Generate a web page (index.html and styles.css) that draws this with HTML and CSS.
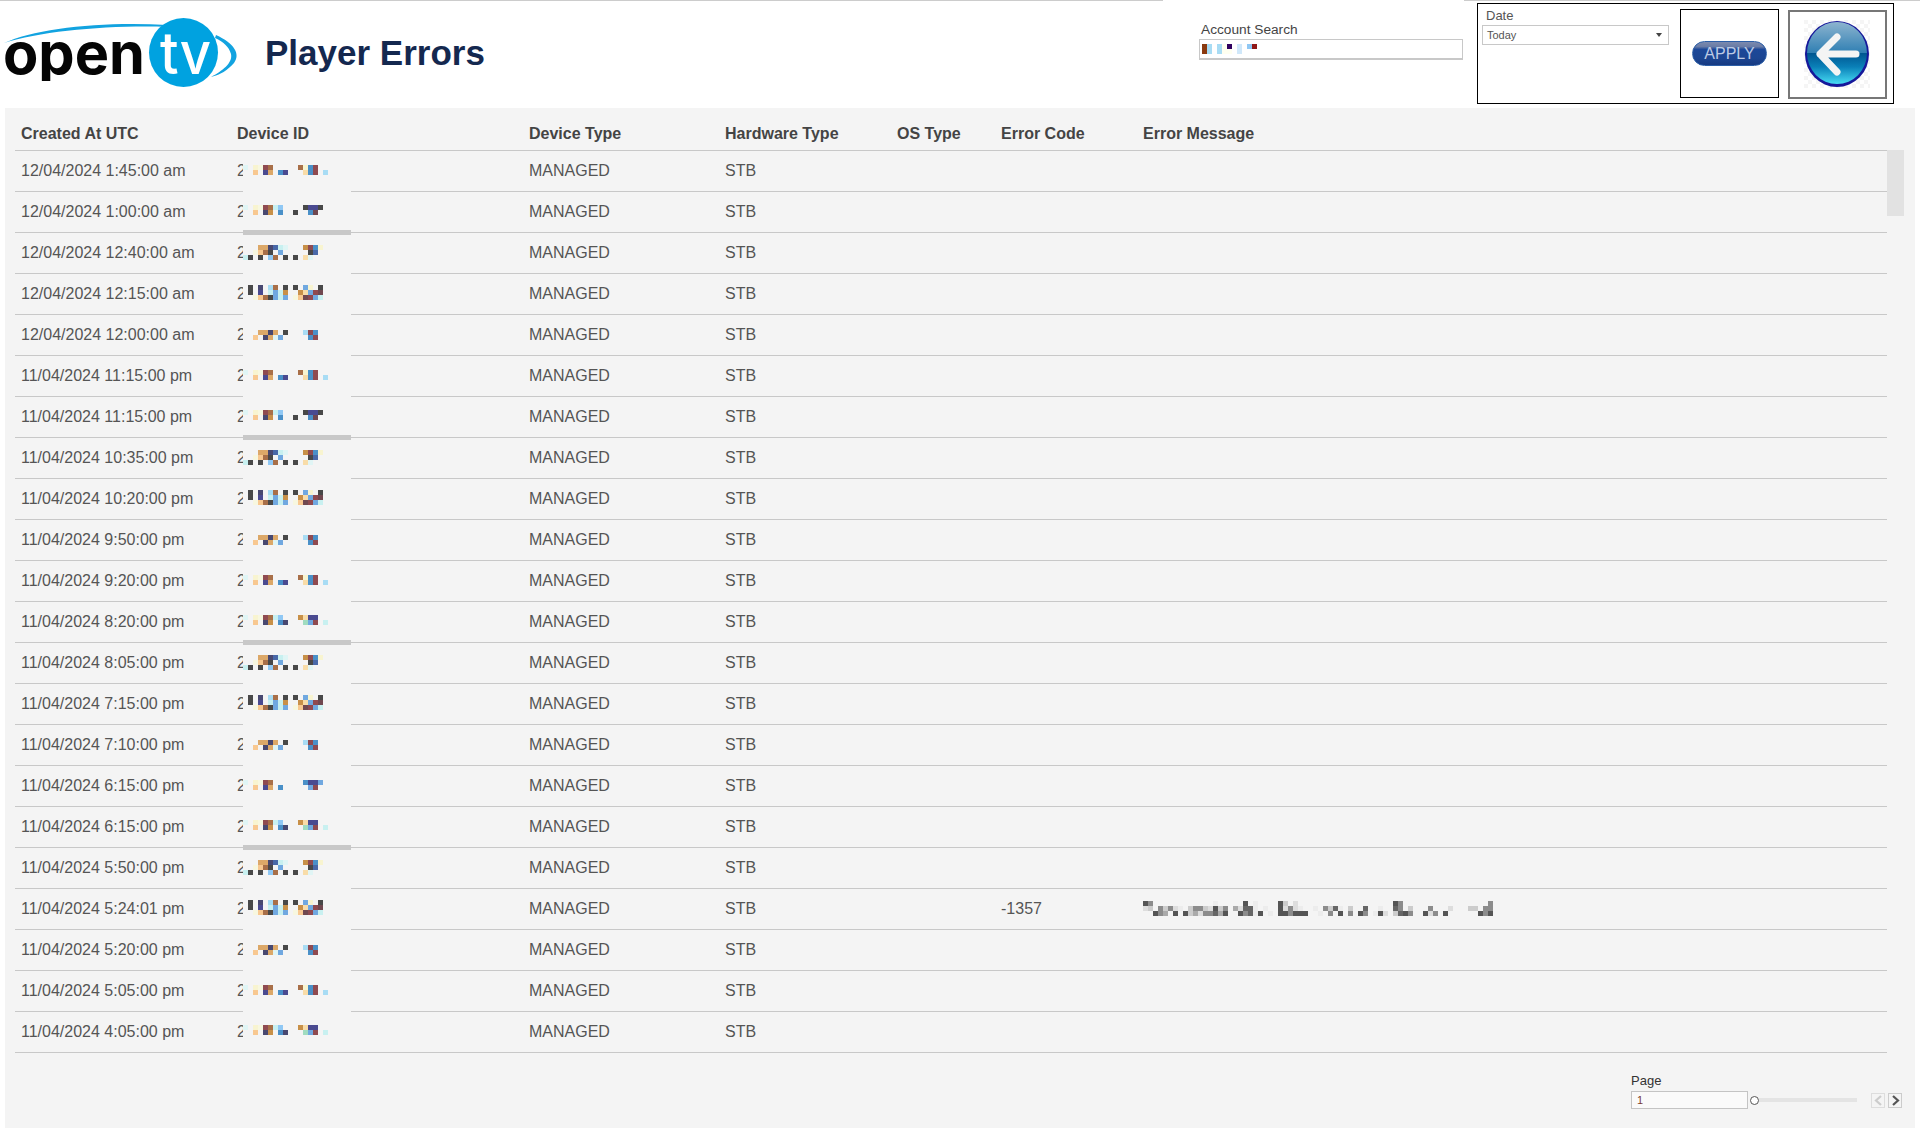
FILE: index.html
```html
<!DOCTYPE html>
<html lang="en">
<head>
<meta charset="utf-8">
<title>Player Errors</title>
<link rel="stylesheet" href="styles.css">
</head>
<body>
<svg class="defs px" aria-hidden="true">
  <symbol id="a" viewBox="0 0 85 40"><rect class="cy" x="0" y="14"/><rect class="ye" x="10" y="14"/><rect class="yl" x="15" y="14"/><rect class="re" x="20" y="14"/><rect class="br" x="25" y="14"/><rect class="br" x="55" y="14"/><rect class="ye" x="60" y="14"/><rect class="bl" x="65" y="14"/><rect class="re" x="70" y="14"/><rect class="pe" x="10" y="19"/><rect class="in" x="20" y="19"/><rect class="ta" x="25" y="19"/><rect class="bl" x="35" y="19"/><rect class="in" x="40" y="19"/><rect class="pa" x="60" y="19"/><rect class="bl" x="65" y="19"/><rect class="re" x="70" y="19"/><rect class="sk" x="80" y="19"/></symbol>
  <symbol id="b" viewBox="0 0 85 40"><rect class="cy" x="0" y="13"/><rect class="ye" x="10" y="13"/><rect class="yl" x="15" y="13"/><rect class="re" x="20" y="13"/><rect class="br" x="25" y="13"/><rect class="lc" x="30" y="13"/><rect class="mb" x="35" y="13"/><rect class="dk" x="60" y="13"/><rect class="in" x="65" y="13"/><rect class="in" x="70" y="13"/><rect class="dk" x="75" y="13"/><rect class="pe" x="10" y="18"/><rect class="sl" x="20" y="18"/><rect class="or" x="25" y="18"/><rect class="bl" x="35" y="18"/><rect class="dk" x="50" y="18"/><rect class="bl" x="65" y="18"/><rect class="mr" x="70" y="18"/></symbol>
  <symbol id="c" viewBox="0 0 85 40"><rect class="ta" x="15" y="12"/><rect class="ta" x="20" y="12"/><rect class="sl" x="25" y="12"/><rect class="st" x="30" y="12"/><rect class="lc" x="35" y="12"/><rect class="cy" x="40" y="12"/><rect class="or" x="60" y="12"/><rect class="re" x="65" y="12"/><rect class="bl" x="70" y="12"/><rect class="ye" x="75" y="12"/><rect class="yl" x="10" y="17"/><rect class="pe" x="15" y="17"/><rect class="br" x="20" y="17"/><rect class="dk" x="25" y="17"/><rect class="lb" x="35" y="17"/><rect class="dk" x="65" y="17"/><rect class="st" x="70" y="17"/><rect class="lc" x="0" y="22"/><rect class="dk" x="5" y="22"/><rect class="dk" x="15" y="22"/><rect class="mb" x="25" y="22"/><rect class="br" x="30" y="22"/><rect class="dk" x="40" y="22"/><rect class="dk" x="50" y="22"/><rect class="pa" x="60" y="22"/><rect class="cy" x="65" y="22"/></symbol>
  <symbol id="d" viewBox="0 0 85 40"><rect class="dk" x="5" y="11"/><rect class="sl" x="15" y="11"/><rect class="sk" x="25" y="11"/><rect class="br" x="30" y="11"/><rect class="dk" x="40" y="11"/><rect class="dk" x="50" y="11"/><rect class="lb" x="60" y="11"/><rect class="ye" x="65" y="11"/><rect class="dk" x="75" y="11"/><rect class="dk" x="5" y="16"/><rect class="in" x="15" y="16"/><rect class="lc" x="25" y="16"/><rect class="lb" x="30" y="16"/><rect class="lc" x="35" y="16"/><rect class="or" x="40" y="16"/><rect class="or" x="55" y="16"/><rect class="pa" x="60" y="16"/><rect class="lb" x="65" y="16"/><rect class="re" x="70" y="16"/><rect class="mr" x="75" y="16"/><rect class="yl" x="10" y="21"/><rect class="pe" x="15" y="21"/><rect class="br" x="20" y="21"/><rect class="dk" x="25" y="21"/><rect class="lb" x="30" y="21"/><rect class="lc" x="35" y="21"/><rect class="lb" x="40" y="21"/><rect class="yl" x="50" y="21"/><rect class="pe" x="55" y="21"/><rect class="mr" x="60" y="21"/><rect class="re" x="65" y="21"/><rect class="lb" x="70" y="21"/><rect class="lc" x="75" y="21"/></symbol>
  <symbol id="e" viewBox="0 0 85 40"><rect class="ta" x="15" y="15"/><rect class="ta" x="20" y="15"/><rect class="sl" x="25" y="15"/><rect class="ta" x="30" y="15"/><rect class="dk" x="40" y="15"/><rect class="sk" x="60" y="15"/><rect class="re" x="65" y="15"/><rect class="bl" x="70" y="15"/><rect class="pe" x="10" y="20"/><rect class="sl" x="20" y="20"/><rect class="ta" x="25" y="20"/><rect class="cy" x="30" y="20"/><rect class="lb" x="35" y="20"/><rect class="bl" x="65" y="20"/><rect class="re" x="70" y="20"/></symbol>
  <symbol id="g" viewBox="0 0 85 40"><rect class="cy" x="0" y="13"/><rect class="ye" x="10" y="13"/><rect class="yl" x="15" y="13"/><rect class="re" x="20" y="13"/><rect class="br" x="25" y="13"/><rect class="lc" x="30" y="13"/><rect class="mb" x="35" y="13"/><rect class="or" x="55" y="13"/><rect class="pa" x="60" y="13"/><rect class="in" x="65" y="13"/><rect class="in" x="70" y="13"/><rect class="pe" x="10" y="18"/><rect class="sl" x="20" y="18"/><rect class="or" x="25" y="18"/><rect class="bl" x="35" y="18"/><rect class="sl" x="40" y="18"/><rect class="mt" x="60" y="18"/><rect class="lb" x="65" y="18"/><rect class="re" x="70" y="18"/><rect class="lc" x="80" y="18"/></symbol>
  <symbol id="f" viewBox="0 0 85 40"><rect class="cy" x="0" y="14"/><rect class="ye" x="10" y="14"/><rect class="yl" x="15" y="14"/><rect class="re" x="20" y="14"/><rect class="br" x="25" y="14"/><rect class="bl" x="60" y="14"/><rect class="in" x="65" y="14"/><rect class="in" x="70" y="14"/><rect class="lb" x="75" y="14"/><rect class="pe" x="10" y="19"/><rect class="in" x="20" y="19"/><rect class="ta" x="25" y="19"/><rect class="bl" x="35" y="19"/><rect class="lb" x="65" y="19"/><rect class="re" x="70" y="19"/></symbol>
</svg>

<header class="top">
  <svg class="logo" viewBox="0 0 245 108" width="245" height="108" role="img" aria-label="OpenTV">
    <defs><clipPath id="cut"><rect x="0" y="30" width="160" height="51"/></clipPath></defs>
    <path class="sw" d="M4 43C36 28 105 21 168 25L168 27C110 25 42 31 4 43Z"/>
    <path class="sw" d="M216 35C234 43 241 54 234 63C228 70 220 75 211 77C222 71 233 63 231 54C229 47 224 42 215 38Z"/>
    <text class="logo-open" x="3" y="74" textLength="142" lengthAdjust="spacingAndGlyphs" clip-path="url(#cut)">open</text>
    <circle class="logo-disc" cx="183.500" cy="52.500" r="34.500"/>
    <text class="logo-tv" x="160" y="74" textLength="51" lengthAdjust="spacingAndGlyphs">tv</text>
  </svg>
  <h1 class="title">Player Errors</h1>
  <div class="account">
    <label class="field-label">Account Search</label>
    <div class="account-input">
      <svg class="px" width="60" height="10" viewBox="0 0 60 10"><rect class="ac1" x="0" y="0"/><rect class="ac1" x="0" y="5"/><rect class="sk" x="5" y="0"/><rect class="sk" x="5" y="5"/><rect class="sk" x="15" y="0"/><rect class="sk" x="15" y="5"/><rect class="ac2" x="20" y="0"/><rect class="ac2" x="20" y="5"/><rect class="ac3" x="25" y="0"/><rect class="ac2" x="25" y="5"/><rect class="ac4" x="35" y="0"/><rect class="ac4" x="35" y="5"/><rect class="mb" x="45" y="0"/><rect class="ac5" x="50" y="0"/></svg>
    </div>
  </div>
  <section class="filters">
    <div class="date-field">
      <label class="date-label">Date</label>
      <div class="date-select"><span>Today</span><span class="caret"></span></div>
    </div>
    <div class="apply-box"><button class="apply-btn" type="button">APPLY</button></div>
    <div class="back-box">
      <svg width="67" height="69" viewBox="0 0 67 69" role="img" aria-label="Back">
        <defs>
          <pattern id="chk" width="8" height="8" patternUnits="userSpaceOnUse"><rect width="8" height="8" fill="#fff"/><rect width="4" height="4" fill="#f5f5f5"/><rect x="4" y="4" width="4" height="4" fill="#f5f5f5"/></pattern>
          <linearGradient id="up" x1="0" y1="0" x2="0" y2="1"><stop offset="0" stop-color="#8db4cf"/><stop offset="1" stop-color="#2f7fb3"/></linearGradient>
          <linearGradient id="lo" x1="0" y1="0" x2="0" y2="1"><stop offset="0" stop-color="#00558f"/><stop offset="0.45" stop-color="#0a80b8"/><stop offset="1" stop-color="#48dcf4"/></linearGradient>
        </defs>
        <rect width="66" height="68" fill="url(#chk)"/>
        <ellipse cx="33" cy="34" rx="32" ry="33" fill="#16189a"/>
        <path d="M3 33A30 31 0 0 1 63 33Z" fill="url(#up)"/>
        <path d="M3 33A30 31 0 0 0 63 33Z" fill="url(#lo)"/>
        <path class="arrow" d="M16 34H52M33 17L16 34L33 52"/>
      </svg>
    </div>
  </section>
</header>

<main class="panel">
  <div class="grid-wrap">
    <div class="table">
      <div class="row head"><span>Created At UTC</span><span>Device ID</span><span>Device Type</span><span>Hardware Type</span><span>OS Type</span><span>Error Code</span><span>Error Message</span></div>
      <div class="row"><span>12/04/2024 1:45:00 am</span><span class="dev"><i>2</i><svg class="px id"><use href="#a"/></svg><b class="mask"></b></span><span>MANAGED</span><span>STB</span><span></span><span></span><span></span></div>
      <div class="row"><span>12/04/2024 1:00:00 am</span><span class="dev"><i>2</i><svg class="px id"><use href="#b"/></svg><b class="bar"></b></span><span>MANAGED</span><span>STB</span><span></span><span></span><span></span></div>
      <div class="row"><span>12/04/2024 12:40:00 am</span><span class="dev"><i>2</i><svg class="px id"><use href="#c"/></svg><b class="mask"></b></span><span>MANAGED</span><span>STB</span><span></span><span></span><span></span></div>
      <div class="row"><span>12/04/2024 12:15:00 am</span><span class="dev"><i>2</i><svg class="px id"><use href="#d"/></svg><b class="mask"></b></span><span>MANAGED</span><span>STB</span><span></span><span></span><span></span></div>
      <div class="row"><span>12/04/2024 12:00:00 am</span><span class="dev"><i>2</i><svg class="px id"><use href="#e"/></svg><b class="mask"></b></span><span>MANAGED</span><span>STB</span><span></span><span></span><span></span></div>
      <div class="row"><span>11/04/2024 11:15:00 pm</span><span class="dev"><i>2</i><svg class="px id"><use href="#a"/></svg><b class="mask"></b></span><span>MANAGED</span><span>STB</span><span></span><span></span><span></span></div>
      <div class="row"><span>11/04/2024 11:15:00 pm</span><span class="dev"><i>2</i><svg class="px id"><use href="#b"/></svg><b class="bar"></b></span><span>MANAGED</span><span>STB</span><span></span><span></span><span></span></div>
      <div class="row"><span>11/04/2024 10:35:00 pm</span><span class="dev"><i>2</i><svg class="px id"><use href="#c"/></svg><b class="mask"></b></span><span>MANAGED</span><span>STB</span><span></span><span></span><span></span></div>
      <div class="row"><span>11/04/2024 10:20:00 pm</span><span class="dev"><i>2</i><svg class="px id"><use href="#d"/></svg><b class="mask"></b></span><span>MANAGED</span><span>STB</span><span></span><span></span><span></span></div>
      <div class="row"><span>11/04/2024 9:50:00 pm</span><span class="dev"><i>2</i><svg class="px id"><use href="#e"/></svg><b class="mask"></b></span><span>MANAGED</span><span>STB</span><span></span><span></span><span></span></div>
      <div class="row"><span>11/04/2024 9:20:00 pm</span><span class="dev"><i>2</i><svg class="px id"><use href="#a"/></svg><b class="mask"></b></span><span>MANAGED</span><span>STB</span><span></span><span></span><span></span></div>
      <div class="row"><span>11/04/2024 8:20:00 pm</span><span class="dev"><i>2</i><svg class="px id"><use href="#g"/></svg><b class="bar"></b></span><span>MANAGED</span><span>STB</span><span></span><span></span><span></span></div>
      <div class="row"><span>11/04/2024 8:05:00 pm</span><span class="dev"><i>2</i><svg class="px id"><use href="#c"/></svg><b class="mask"></b></span><span>MANAGED</span><span>STB</span><span></span><span></span><span></span></div>
      <div class="row"><span>11/04/2024 7:15:00 pm</span><span class="dev"><i>2</i><svg class="px id"><use href="#d"/></svg><b class="mask"></b></span><span>MANAGED</span><span>STB</span><span></span><span></span><span></span></div>
      <div class="row"><span>11/04/2024 7:10:00 pm</span><span class="dev"><i>2</i><svg class="px id"><use href="#e"/></svg><b class="mask"></b></span><span>MANAGED</span><span>STB</span><span></span><span></span><span></span></div>
      <div class="row"><span>11/04/2024 6:15:00 pm</span><span class="dev"><i>2</i><svg class="px id"><use href="#f"/></svg><b class="mask"></b></span><span>MANAGED</span><span>STB</span><span></span><span></span><span></span></div>
      <div class="row"><span>11/04/2024 6:15:00 pm</span><span class="dev"><i>2</i><svg class="px id"><use href="#g"/></svg><b class="bar"></b></span><span>MANAGED</span><span>STB</span><span></span><span></span><span></span></div>
      <div class="row"><span>11/04/2024 5:50:00 pm</span><span class="dev"><i>2</i><svg class="px id"><use href="#c"/></svg><b class="mask"></b></span><span>MANAGED</span><span>STB</span><span></span><span></span><span></span></div>
      <div class="row"><span>11/04/2024 5:24:01 pm</span><span class="dev"><i>2</i><svg class="px id"><use href="#d"/></svg><b class="mask"></b></span><span>MANAGED</span><span>STB</span><span></span><span>-1357</span><span class="msg">
        <svg class="px" width="360" height="40" viewBox="0 0 360 40"><rect class="g5" x="0" y="12"/><rect class="g9" x="5" y="12"/><rect class="ge" x="70" y="12"/><rect class="g5" x="100" y="12"/><rect class="ge" x="110" y="12"/><rect class="g5" x="135" y="12"/><rect class="gc" x="140" y="12"/><rect class="gd" x="150" y="12"/><rect class="g5" x="250" y="12"/><rect class="g9" x="255" y="12"/><rect class="g9" x="345" y="12"/><rect class="gd" x="0" y="17"/><rect class="gc" x="5" y="17"/><rect class="g9" x="15" y="17"/><rect class="gc" x="20" y="17"/><rect class="g9" x="25" y="17"/><rect class="gd" x="30" y="17"/><rect class="ge" x="35" y="17"/><rect class="gc" x="45" y="17"/><rect class="g9" x="50" y="17"/><rect class="g9" x="55" y="17"/><rect class="gc" x="60" y="17"/><rect class="gd" x="65" y="17"/><rect class="g5" x="70" y="17"/><rect class="gc" x="75" y="17"/><rect class="g9" x="80" y="17"/><rect class="ga" x="90" y="17"/><rect class="gd" x="95" y="17"/><rect class="g6" x="100" y="17"/><rect class="g6" x="105" y="17"/><rect class="ge" x="110" y="17"/><rect class="ge" x="120" y="17"/><rect class="g5" x="135" y="17"/><rect class="gd" x="140" y="17"/><rect class="g9" x="145" y="17"/><rect class="gd" x="150" y="17"/><rect class="ge" x="155" y="17"/><rect class="ge" x="170" y="17"/><rect class="g9" x="180" y="17"/><rect class="gc" x="185" y="17"/><rect class="g6" x="190" y="17"/><rect class="ge" x="195" y="17"/><rect class="gc" x="205" y="17"/><rect class="g6" x="220" y="17"/><rect class="ge" x="235" y="17"/><rect class="g6" x="250" y="17"/><rect class="g9" x="255" y="17"/><rect class="gc" x="265" y="17"/><rect class="g9" x="285" y="17"/><rect class="gd" x="305" y="17"/><rect class="gc" x="325" y="17"/><rect class="gc" x="330" y="17"/><rect class="g9" x="340" y="17"/><rect class="g9" x="345" y="17"/><rect class="g5" x="10" y="22"/><rect class="g9" x="15" y="22"/><rect class="ga" x="20" y="22"/><rect class="g5" x="30" y="22"/><rect class="g5" x="40" y="22"/><rect class="gc" x="45" y="22"/><rect class="ga" x="50" y="22"/><rect class="gd" x="55" y="22"/><rect class="g9" x="60" y="22"/><rect class="g9" x="65" y="22"/><rect class="g6" x="70" y="22"/><rect class="ga" x="75" y="22"/><rect class="g5" x="80" y="22"/><rect class="g5" x="95" y="22"/><rect class="g9" x="100" y="22"/><rect class="g6" x="105" y="22"/><rect class="ge" x="110" y="22"/><rect class="g5" x="115" y="22"/><rect class="ge" x="125" y="22"/><rect class="g5" x="135" y="22"/><rect class="g5" x="140" y="22"/><rect class="g9" x="145" y="22"/><rect class="g5" x="150" y="22"/><rect class="g5" x="155" y="22"/><rect class="g5" x="160" y="22"/><rect class="ge" x="175" y="22"/><rect class="g9" x="185" y="22"/><rect class="g5" x="195" y="22"/><rect class="g9" x="205" y="22"/><rect class="g5" x="215" y="22"/><rect class="g9" x="220" y="22"/><rect class="ge" x="230" y="22"/><rect class="g5" x="235" y="22"/><rect class="gd" x="240" y="22"/><rect class="gc" x="250" y="22"/><rect class="g6" x="255" y="22"/><rect class="g5" x="260" y="22"/><rect class="g9" x="265" y="22"/><rect class="g5" x="280" y="22"/><rect class="gd" x="285" y="22"/><rect class="g9" x="290" y="22"/><rect class="g5" x="300" y="22"/><rect class="g5" x="335" y="22"/><rect class="g9" x="340" y="22"/><rect class="g5" x="345" y="22"/></svg>
      </span></div>
      <div class="row"><span>11/04/2024 5:20:00 pm</span><span class="dev"><i>2</i><svg class="px id"><use href="#e"/></svg><b class="mask"></b></span><span>MANAGED</span><span>STB</span><span></span><span></span><span></span></div>
      <div class="row"><span>11/04/2024 5:05:00 pm</span><span class="dev"><i>2</i><svg class="px id"><use href="#a"/></svg><b class="mask"></b></span><span>MANAGED</span><span>STB</span><span></span><span></span><span></span></div>
      <div class="row"><span>11/04/2024 4:05:00 pm</span><span class="dev"><i>2</i><svg class="px id"><use href="#g"/></svg></span><span>MANAGED</span><span>STB</span><span></span><span></span><span></span></div>
    </div>
    <div class="scroll"><div class="thumb"></div></div>
  </div>
  <nav class="pager">
    <div class="page-field">
      <label class="page-label">Page</label>
      <div class="page-controls">
        <div class="page-input">1</div>
        <div class="slider"><span class="knob"></span><span class="track"></span></div>
        <div class="steps">
          <span class="step off"><svg width="9" height="11" viewBox="0 0 9 11"><path d="M7 1L2 5.500L7 10"/></svg></span>
          <span class="step"><svg width="9" height="11" viewBox="0 0 9 11"><path d="M2 1L7 5.500L2 10"/></svg></span>
        </div>
      </div>
    </div>
  </nav>
</main>
</body>
</html>
```
FILE: styles.css
```css
* { box-sizing: border-box; }
html, body { margin: 0; padding: 0; height: 100%; }
body {
  background: #fff;
  font-family: "Liberation Sans", Arial, sans-serif;
  color: #555;
  overflow: hidden;
}
.defs { position: absolute; width: 0; height: 0; }
.px rect { width: 5px; height: 5px; }
.cy { fill: #e0f5f5; } .ye { fill: #f8f4d0; } .yl { fill: #f7f7e0; } .re { fill: #8f4a50; }
.br { fill: #a86f48; } .bl { fill: #4a90c8; } .in { fill: #4a4a90; } .pe { fill: #f8c890; }
.ta { fill: #dca868; } .sk { fill: #a8dcf4; } .or { fill: #c89048; } .dk { fill: #484848; }
.sl { fill: #484870; } .pa { fill: #f8dca8; } .lb { fill: #70a8e0; } .lc { fill: #c8f0f0; }
.mb { fill: #90c8f4; } .st { fill: #4868a8; } .mr { fill: #704850; } .mt { fill: #a0dcc0; }
.ac1 { fill: #8a3a10; } .ac2 { fill: #fffff0; } .ac3 { fill: #300060; } .ac4 { fill: #d0e8fa; } .ac5 { fill: #901818; }
.g5 { fill: #555; } .g6 { fill: #666; } .g9 { fill: #8c8c8c; } .ga { fill: #aaa; } .gc { fill: #ccc; } .gd { fill: #ddd; } .ge { fill: #ececec; }

.top {
  display: flex;
  align-items: flex-start;
  height: 108px;
  background: linear-gradient(to right, #ccc 1163px, transparent 1163px, transparent 1464px, #ccc 1464px) top / 100% 1px no-repeat;
}
.logo { flex: none; display: block; }
.sw { fill: #12a3e0; }
.logo-open { font-family: Inter, "Liberation Sans", sans-serif; font-weight: 700; font-size: 58px; fill: #050505; }
.logo-disc { fill: #00a2e0; }
.logo-tv { font-family: Inter, "Liberation Sans", sans-serif; font-weight: 500; font-size: 58px; fill: #fff; }
.title {
  margin: 33px 0 0 20px;
  font-size: 35px;
  line-height: 40px;
  font-weight: 700;
  color: #14284f;
}
.account { margin: 21px 0 0 auto; width: 264px; }
.field-label {
  display: block;
  margin-left: 2px;
  font-size: 13.700px;
  line-height: 17px;
  color: #444;
}
.account-input {
  height: 21px;
  margin-top: 1px;
  border: 1px solid #c8c8c8;
  border-bottom-width: 2px;
  padding: 4px 0 0 2px;
  background: #fff;
}
.account-input svg { display: block; }

.filters {
  display: flex;
  align-items: flex-start;
  width: 417px;
  height: 101px;
  margin: 3px 26px 0 14px;
  padding: 0 0 0 4px;
  border: 1px solid #000;
}
.date-field { width: 187px; }
.date-label {
  display: block;
  margin: 4px 0 1px 4px;
  font-size: 13px;
  line-height: 16px;
  color: #555;
}
.date-select {
  display: flex;
  justify-content: space-between;
  align-items: center;
  height: 20px;
  padding: 0 6px 0 4px;
  border: 1px solid #c8c8c8;
  font-size: 11px;
  color: #555;
}
.caret {
  width: 0;
  height: 0;
  border-left: 3px solid transparent;
  border-right: 3px solid transparent;
  border-top: 4px solid #444;
}
.apply-box {
  display: flex;
  justify-content: center;
  align-items: center;
  width: 99px;
  height: 89px;
  margin: 5px 0 0 11px;
  border: 1px solid #000;
}
.apply-btn {
  width: 75px;
  height: 25px;
  padding: 0;
  border: 1px solid #2c5fa8;
  border-radius: 13px;
  background: linear-gradient(#7c8aae 0, #6a7ca6 20%, #1c4899 32%, #1c4692 70%, #173a82 100%);
  color: #bccbe4;
  font: 16px "Liberation Sans", sans-serif;
}
.back-box {
  display: flex;
  justify-content: center;
  align-items: center;
  width: 99px;
  height: 89px;
  margin: 6px 0 0 9px;
  border: 2px solid #777;
}
.back-box svg { display: block; }
.arrow { fill: none; stroke: #f4f4f4; stroke-width: 7; stroke-linecap: round; stroke-linejoin: round; }

.panel {
  height: 1020px;
  margin: 0 5px;
  padding-left: 10px;
  background: #f4f4f4;
}
.grid-wrap { display: flex; align-items: flex-start; }
.table { width: 1872px; flex: none; }
.row {
  display: grid;
  grid-template-columns: 216px 292px 196px 172px 104px 142px 1fr;
  align-items: center;
  height: 41px;
  padding-left: 6px;
  border-bottom: 1px solid #c8c8c8;
  font-size: 16px;
  color: #555;
}
.row > span { display: flex; align-items: center; height: 40px; white-space: nowrap; }
.head { height: 43px; padding-top: 9px; font-weight: 700; color: #444; }
.head > span { height: 33px; }
.dev { position: relative; }
.dev i { display: block; width: 6px; font-style: normal; }
.id { display: block; position: relative; width: 85px; height: 40px; background: #f4f4f4; }
.mask, .bar { position: absolute; left: 6px; width: 108px; z-index: 1; }
.mask { bottom: -1px; height: 1px; background: #f4f4f4; }
.bar { bottom: -3px; height: 5px; background: #c8c8c8; }
.msg svg { display: block; }
.scroll { flex: none; width: 17px; margin-top: 42px; }
.thumb { height: 66px; background: #e2e2e2; }

.pager { display: flex; justify-content: flex-end; padding: 20px 13px 0 0; }
.page-label { display: block; font-size: 13px; line-height: 16px; color: #333; }
.page-controls { display: flex; align-items: center; margin-top: 2px; }
.page-input {
  width: 117px;
  height: 18px;
  padding-left: 5px;
  border: 1px solid #c4c4c4;
  background: #fafafa;
  font-size: 11px;
  line-height: 16px;
  color: #7a3a30;
}
.slider { display: flex; align-items: center; width: 111px; margin-left: 2px; }
.knob { flex: none; width: 9px; height: 9px; border: 1.500px solid #555; border-radius: 50%; background: #fff; }
.track { width: 98px; height: 4px; background: #e4e4e4; }
.steps { display: flex; gap: 3px; margin-left: 10px; }
.step {
  display: flex;
  justify-content: center;
  align-items: center;
  width: 14px;
  height: 15px;
  border: 1px solid #ccc;
}
.step path { fill: none; stroke: #555; stroke-width: 2.200; }
.step.off { border-color: #ddd; }
.step.off path { stroke: #ccc; }
```
